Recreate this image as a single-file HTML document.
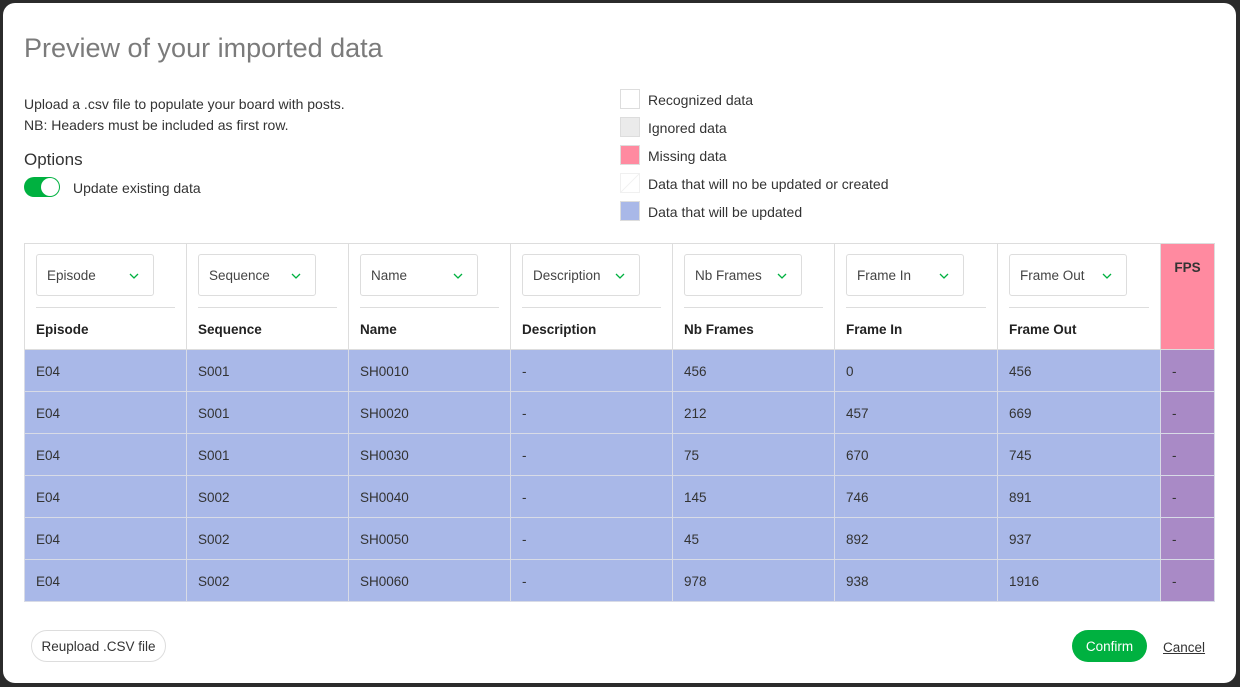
<!DOCTYPE html>
<html><head><style>
*{box-sizing:border-box;margin:0;padding:0}
body{width:1240px;height:687px;background:#2b2b2b;font-family:"Liberation Sans",sans-serif;color:#333;position:relative;overflow:hidden}
.modal{position:absolute;left:3px;top:3px;width:1233px;height:680px;background:#fff;border-radius:12px}
.abs{position:absolute}
h1{position:absolute;left:21px;top:30px;font-size:27px;font-weight:normal;color:#7b7b7b}
.t13{font-size:14px;color:#333}
.sw{width:20px;height:20px;border:1px solid #ddd;position:absolute;left:617px}
.lg{position:absolute;left:645px;font-size:14px;color:#333}
table{position:absolute;left:21px;top:240px;border-collapse:collapse;font-size:13.5px}
td,th{border:1px solid #d8dbe6;height:42px;padding:1px 11px 0;text-align:left;vertical-align:middle;background:#a9b8e8;color:#333;font-weight:normal}
th{background:#fff;border-color:#ddd;height:106px;vertical-align:top;padding:10px 11px 0 11px}
.dd{width:118px;height:42px;border:1px solid #ddd;border-radius:3px;position:relative;font-size:13.5px;line-height:42px;padding-left:10px;color:#444}
.dd svg{position:absolute;right:14px;top:18px}
.hr{border-top:1px solid #ddd;margin-top:11px;height:32px;padding-top:14px;font-weight:bold;color:#222}
td.f{background:#a98ac6}
th.f{background:#ff8aa0;font-weight:bold;text-align:center;padding-top:16px}
</style></head><body>
<div class="modal">
<h1>Preview of your imported data</h1>
<div class="abs t13" style="left:21px;top:93px">Upload a .csv file to populate your board with posts.</div>
<div class="abs t13" style="left:21px;top:114px">NB: Headers must be included as first row.</div>
<div class="abs" style="left:21px;top:147px;font-size:17px;color:#333">Options</div>
<div class="abs" style="left:21px;top:174px;width:36px;height:20px;border-radius:10px;background:#00b140"><div style="position:absolute;right:1px;top:1px;width:18px;height:18px;border-radius:50%;background:#fff"></div></div>
<div class="abs t13" style="left:70px;top:177px">Update existing data</div>

<div class="sw" style="top:86px;background:#fff"></div><div class="lg" style="top:89px">Recognized data</div>
<div class="sw" style="top:114px;background:#ebebeb"></div><div class="lg" style="top:117px">Ignored data</div>
<div class="sw" style="top:142px;background:#ff8aa0"></div><div class="lg" style="top:145px">Missing data</div>
<div class="sw" style="top:170px;background:linear-gradient(135deg,#fff 47%,#eee 50%,#fff 53%);border-color:#f0f0f0"></div><div class="lg" style="top:173px">Data that will no be updated or created</div>
<div class="sw" style="top:198px;background:#a9b8e8"></div><div class="lg" style="top:201px">Data that will be updated</div>

<table>
<tr>
<th style="width:162px"><div class="dd">Episode<svg width="10" height="7"><path d="M1 1l4 4 4-4" stroke="#00b140" fill="none" stroke-width="1.3"/></svg></div><div class="hr">Episode</div></th>
<th style="width:162px"><div class="dd">Sequence<svg width="10" height="7"><path d="M1 1l4 4 4-4" stroke="#00b140" fill="none" stroke-width="1.3"/></svg></div><div class="hr">Sequence</div></th>
<th style="width:162px"><div class="dd">Name<svg width="10" height="7"><path d="M1 1l4 4 4-4" stroke="#00b140" fill="none" stroke-width="1.3"/></svg></div><div class="hr">Name</div></th>
<th style="width:162px"><div class="dd">Description<svg width="10" height="7"><path d="M1 1l4 4 4-4" stroke="#00b140" fill="none" stroke-width="1.3"/></svg></div><div class="hr">Description</div></th>
<th style="width:162px"><div class="dd">Nb Frames<svg width="10" height="7"><path d="M1 1l4 4 4-4" stroke="#00b140" fill="none" stroke-width="1.3"/></svg></div><div class="hr">Nb Frames</div></th>
<th style="width:163px"><div class="dd">Frame In<svg width="10" height="7"><path d="M1 1l4 4 4-4" stroke="#00b140" fill="none" stroke-width="1.3"/></svg></div><div class="hr">Frame In</div></th>
<th style="width:163px"><div class="dd">Frame Out<svg width="10" height="7"><path d="M1 1l4 4 4-4" stroke="#00b140" fill="none" stroke-width="1.3"/></svg></div><div class="hr">Frame Out</div></th>
<th class="f" style="width:54px">FPS</th>
</tr>
<tr><td>E04</td><td>S001</td><td>SH0010</td><td>-</td><td>456</td><td>0</td><td>456</td><td class="f">-</td></tr>
<tr><td>E04</td><td>S001</td><td>SH0020</td><td>-</td><td>212</td><td>457</td><td>669</td><td class="f">-</td></tr>
<tr><td>E04</td><td>S001</td><td>SH0030</td><td>-</td><td>75</td><td>670</td><td>745</td><td class="f">-</td></tr>
<tr><td>E04</td><td>S002</td><td>SH0040</td><td>-</td><td>145</td><td>746</td><td>891</td><td class="f">-</td></tr>
<tr><td>E04</td><td>S002</td><td>SH0050</td><td>-</td><td>45</td><td>892</td><td>937</td><td class="f">-</td></tr>
<tr><td>E04</td><td>S002</td><td>SH0060</td><td>-</td><td>978</td><td>938</td><td>1916</td><td class="f">-</td></tr>
</table>

<div class="abs" style="left:28px;top:627px;width:135px;height:32px;border:1px solid #ddd;border-radius:16px;font-size:13.5px;line-height:32px;text-align:center;color:#333">Reupload .CSV file</div>
<div class="abs" style="left:1069px;top:627px;width:75px;height:32px;border-radius:16px;background:#00b140;color:#fff;font-size:13.5px;line-height:34px;text-align:center">Confirm</div>
<div class="abs" style="left:1160px;top:637px;font-size:13.5px;text-decoration:underline;color:#333">Cancel</div>
</div>
</body></html>
